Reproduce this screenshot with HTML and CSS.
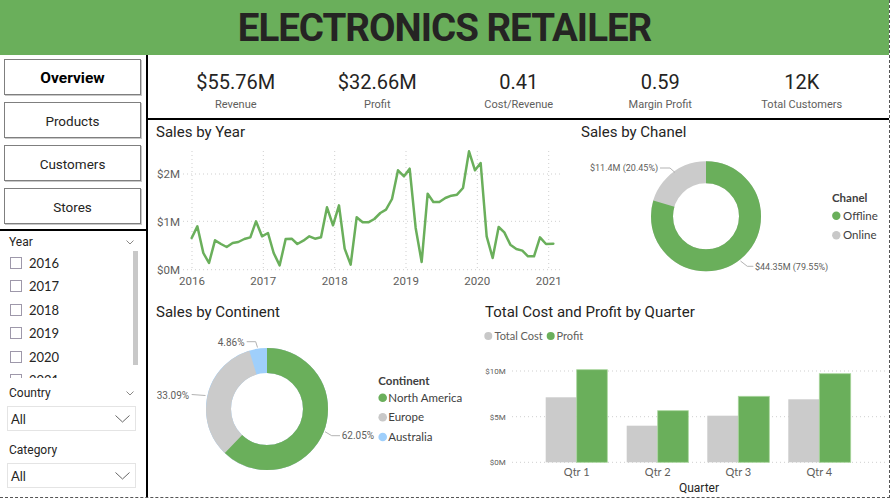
FILE: index.html
```html
<!DOCTYPE html>
<html lang="en">
<head>
<meta charset="utf-8">
<title>Electronics Retailer</title>
<link rel="stylesheet" href="styles.css">
</head>
<body>
<div class="page">
  <header class="banner"><h1>ELECTRONICS RETAILER</h1></header>
  <div class="main">
    <aside class="sidebar">
      <nav class="nav">
        <div class="nav-btn active">Overview</div>
        <div class="nav-btn">Products</div>
        <div class="nav-btn">Customers</div>
        <div class="nav-btn">Stores</div>
      </nav>
      <div class="filters">
        <div class="slicer slicer-year">
          <div class="slicer-head"><span>Year</span>
            <svg class="chev-sm" width="8" height="5" viewBox="0 0 8 5"><polyline points="0.5,0.5 4,4 7.5,0.5"/></svg>
          </div>
          <div class="year-body">
            <ul class="year-list">
              <li><span class="box"></span>2016</li>
              <li><span class="box"></span>2017</li>
              <li><span class="box"></span>2018</li>
              <li><span class="box"></span>2019</li>
              <li><span class="box"></span>2020</li>
              <li><span class="box"></span>2021</li>
            </ul>
            <div class="scrollbar"></div>
          </div>
        </div>
        <div class="slicer slicer-country">
          <div class="slicer-head"><span>Country</span>
            <svg class="chev-sm" width="8" height="5" viewBox="0 0 8 5"><polyline points="0.5,0.5 4,4 7.5,0.5"/></svg>
          </div>
          <div class="dropdown"><span>All</span>
            <svg class="chev-lg" width="15" height="8" viewBox="0 0 15 8"><polyline points="0.5,0.5 7.5,7 14.5,0.5"/></svg>
          </div>
        </div>
        <div class="slicer slicer-category">
          <div class="slicer-head"><span>Category</span></div>
          <div class="dropdown"><span>All</span>
            <svg class="chev-lg" width="15" height="8" viewBox="0 0 15 8"><polyline points="0.5,0.5 7.5,7 14.5,0.5"/></svg>
          </div>
        </div>
      </div>
    </aside>

    <section class="content">
      <div class="kpis">
        <div class="kpi"><div class="kpi-value">$55.76M</div><div class="kpi-label">Revenue</div></div>
        <div class="kpi"><div class="kpi-value">$32.66M</div><div class="kpi-label">Profit</div></div>
        <div class="kpi"><div class="kpi-value">0.41</div><div class="kpi-label">Cost/Revenue</div></div>
        <div class="kpi"><div class="kpi-value">0.59</div><div class="kpi-label">Margin Profit</div></div>
        <div class="kpi"><div class="kpi-value">12K</div><div class="kpi-label">Total Customers</div></div>
      </div>

      <div class="row row-mid">
        <div class="panel panel-year">
          <div class="panel-title">Sales by Year</div>
          <svg class="chart" width="422" height="153" viewBox="148 142 422 153">
            <g class="grid">
              <line x1="183" y1="174" x2="562" y2="174"/>
              <line x1="183" y1="221.3" x2="562" y2="221.3"/>
              <line x1="183" y1="269.7" x2="562" y2="269.7"/>
              <line x1="192" y1="151" x2="192" y2="269.7"/>
              <line x1="263.3" y1="151" x2="263.3" y2="269.7"/>
              <line x1="334.7" y1="151" x2="334.7" y2="269.7"/>
              <line x1="406" y1="151" x2="406" y2="269.7"/>
              <line x1="477.3" y1="151" x2="477.3" y2="269.7"/>
              <line x1="548.7" y1="151" x2="548.7" y2="269.7"/>
            </g>
            <g class="axis">
              <text x="157" y="178">$2M</text>
              <text x="157" y="225.5">$1M</text>
              <text x="157" y="274">$0M</text>
            </g>
            <g class="axis mid">
              <text x="192" y="284.5">2016</text>
              <text x="263.3" y="284.5">2017</text>
              <text x="334.7" y="284.5">2018</text>
              <text x="406" y="284.5">2019</text>
              <text x="477.3" y="284.5">2020</text>
              <text x="548.7" y="284.5">2021</text>
            </g>
            <polyline class="trend" transform="translate(145 118) scale(0.33333)" points="140,360 157,325 175,405 192,435 210,367 228,378 245,387 263,375 280,372 298,363 316,358 333,310 351,355 369,345 386,405 404,442 422,363 440,362 457,378 475,368 493,355 510,362 528,358 546,268 564,322 582,262 599,392 617,440 635,298 653,313 670,313 688,303 706,285 723,275 741,243 759,157 777,175 794,152 812,330 830,432 848,227 865,252 883,252 901,240 919,233 936,230 954,210 972,100 990,157 1007,135 1025,355 1043,420 1061,327 1078,343 1096,380 1114,393 1132,398 1149,415 1167,415 1185,358 1203,378 1225,377"/>
          </svg>
        </div>
        <div class="panel panel-chanel">
          <div class="panel-title">Sales by Chanel</div>
          <svg class="chart" width="319" height="153" viewBox="570 142 319 153">
            <circle class="seg gray" cx="706" cy="216.3" r="44"/>
            <circle class="seg green" cx="706" cy="216.3" r="44" stroke-dasharray="219.93 400" transform="rotate(-90 706 216.3)"/>
            <polyline class="leader" points="660,168 670,168 675,172.5"/>
            <polyline class="leader" points="740.5,261 747.3,266.3 753.3,266.3"/>
            <text class="dlabel small" x="590" y="171.3">$11.4M (20.45%)</text>
            <text class="dlabel small" x="755" y="269.5">$44.35M (79.55%)</text>
            <text class="legend-title" x="832" y="202.3">Chanel</text>
            <circle class="dot-green" cx="836.3" cy="215.7" r="4.2"/>
            <text class="legend" x="843" y="219.8">Offline</text>
            <circle class="dot-gray" cx="836.3" cy="235.3" r="4.2"/>
            <text class="legend" x="843" y="239.4">Online</text>
          </svg>
        </div>
      </div>

      <div class="row row-bot">
        <div class="panel panel-continent">
          <div class="panel-title">Sales by Continent</div>
          <svg class="chart" width="327" height="175" viewBox="148 322 327 175">
            <circle class="seg blue" cx="267" cy="409" r="48.5"/>
            <circle class="seg gray" cx="267" cy="409" r="48.5" stroke-dasharray="289.92 400" transform="rotate(-90 267 409)"/>
            <circle class="seg green" cx="267" cy="409" r="48.5" stroke-dasharray="189.08 400" transform="rotate(-90 267 409)"/>
            <polyline class="leader" points="246.7,341.7 255.7,341.7 257.5,347.5"/>
            <polyline class="leader" points="191.7,394.5 205.5,395.5"/>
            <polyline class="leader" points="325,431.7 331.7,435.7 340,435.7"/>
            <text class="dlabel" x="217.7" y="346">4.86%</text>
            <text class="dlabel" x="156.7" y="398.7">33.09%</text>
            <text class="dlabel" x="341.7" y="439.3">62.05%</text>
            <text class="legend-title" x="378.3" y="385.2">Continent</text>
            <circle class="dot-green" cx="382.7" cy="397.7" r="4.3"/>
            <text class="legend" x="388.3" y="401.8">North America</text>
            <circle class="dot-gray" cx="382.7" cy="417.3" r="4.3"/>
            <text class="legend" x="388.3" y="421.4">Europe</text>
            <circle class="dot-blue" cx="382.7" cy="437" r="4.3"/>
            <text class="legend" x="388.3" y="441.1">Australia</text>
          </svg>
        </div>
        <div class="panel panel-quarter">
          <div class="panel-title">Total Cost and Profit by Quarter</div>
          <svg class="chart" width="414" height="175" viewBox="475 322 414 175">
            <circle class="dot-gray" cx="488.3" cy="336" r="4"/>
            <text class="legend qlegend" x="494.5" y="339.8">Total Cost</text>
            <circle class="dot-green" cx="550.7" cy="336" r="4"/>
            <text class="legend qlegend" x="556.5" y="339.8">Profit</text>
            <g class="grid">
              <line x1="512" y1="371" x2="887" y2="371"/>
              <line x1="512" y1="416.7" x2="887" y2="416.7"/>
              <line x1="512" y1="462.3" x2="887" y2="462.3"/>
            </g>
            <g class="axis tiny end">
              <text x="505.7" y="373.8">$10M</text>
              <text x="505.7" y="419.5">$5M</text>
              <text x="505.7" y="465.1">$0M</text>
            </g>
            <g class="bars">
              <rect class="bar-gray" x="545.7" y="397.3" width="31" height="65"/>
              <rect class="bar-green" x="576.7" y="369.7" width="30.6" height="92.6"/>
              <rect class="bar-gray" x="626.7" y="425.7" width="31" height="36.6"/>
              <rect class="bar-green" x="657.7" y="410.7" width="30.6" height="51.6"/>
              <rect class="bar-gray" x="707.3" y="415.7" width="31" height="46.6"/>
              <rect class="bar-green" x="738.3" y="396.3" width="31" height="66"/>
              <rect class="bar-gray" x="788.3" y="399.3" width="31" height="63"/>
              <rect class="bar-green" x="819.3" y="373.7" width="31.4" height="88.6"/>
            </g>
            <g class="qlabels">
              <text x="576.7" y="476">Qtr 1</text>
              <text x="657.7" y="476">Qtr 2</text>
              <text x="738.3" y="476">Qtr 3</text>
              <text x="819.3" y="476">Qtr 4</text>
            </g>
            <text class="axis-title" x="699" y="491.8">Quarter</text>
          </svg>
        </div>
      </div>
    </section>
  </div>
</div>
</body>
</html>
```

FILE: styles.css
```css
* { box-sizing: border-box; }
body {
  margin: 0;
  background: #ffffff;
  font-family: Roboto, "DejaVu Sans", sans-serif;
  color: #252423;
}
.page {
  width: 890px;
  height: 498px;
  border-right: 1px dashed #555555;
  border-bottom: 1px dashed #555555;
  display: flex;
  flex-direction: column;
  overflow: hidden;
}
.banner {
  height: 55px;
  flex: none;
  background: #6aaf5b;
  display: flex;
  align-items: center;
  justify-content: center;
  padding-top: 2px;
}
.banner h1 {
  margin: 0;
  font-family: Roboto, sans-serif;
  font-weight: 700;
  font-size: 38.5px;
  line-height: 1;
  letter-spacing: -1px;
  color: #252423;
}
.main { display: flex; flex: 1; min-height: 0; }

/* Sidebar */
.sidebar {
  width: 148px;
  flex: none;
  border-right: 2px solid #000;
  display: flex;
  flex-direction: column;
}
.nav {
  display: flex;
  flex-direction: column;
  gap: 7px;
  padding: 4px 5px 5px 4px;
  border-bottom: 2px solid #000;
}
.nav-btn {
  height: 36px;
  border: 1px solid #7f7f7f;
  box-shadow: 1px 1px 0 #c8c8c8;
  display: flex;
  align-items: center;
  justify-content: center;
  font-size: 13.5px;
  color: #252423;
  padding-top: 1px;
}
.nav-btn.active { font-weight: 700; font-size: 15.5px; color: #000; }

.filters { display: flex; flex-direction: column; }
.slicer-head {
  display: flex;
  justify-content: space-between;
  align-items: center;
  height: 16px;
  line-height: 16px;
  padding: 0 12px 0 9px;
  font-size: 12px;
  color: #252423;
}
.chev-sm polyline { fill: none; stroke: #8a8886; stroke-width: 1; }
.chev-lg polyline { fill: none; stroke: #666; stroke-width: 1; }
.slicer-year { padding-top: 3px; }
.year-body {
  display: flex;
  height: 128px;
  padding-top: 1px;
  overflow: hidden;
}
.year-list {
  list-style: none;
  margin: 0;
  padding: 0 0 0 10px;
  flex: 1;
}
.year-list li {
  height: 23.5px;
  display: flex;
  align-items: center;
  font-family: Lato, "Noto Sans", sans-serif;
  font-size: 13px;
  color: #252423;
}
.box {
  width: 12px;
  height: 12px;
  border: 1px solid #9e98aa;
  margin-right: 7px;
  flex: none;
}
.scrollbar {
  width: 5px;
  height: 114px;
  background: #c8c8c8;
  margin-right: 8px;
  flex: none;
}
.slicer-country { margin-top: 7px; }
.slicer-category { margin-top: 11px; }
.dropdown {
  margin: 5px 0 0 7px;
  width: 129px;
  height: 25px;
  border: 1px solid #e4e4e4;
  display: flex;
  align-items: center;
  justify-content: space-between;
  padding: 0 5px 0 3px;
  font-family: Lato, "Noto Sans", sans-serif;
  font-size: 13px;
  color: #252423;
}

/* Content */
.content { flex: 1; display: flex; flex-direction: column; min-width: 0; }
.kpis {
  height: 65px;
  flex: none;
  border-bottom: 2px solid #000;
  display: grid;
  grid-template-columns: repeat(5, 141.5px);
  padding-left: 17px;
}
.kpi { text-align: center; padding-top: 15px; }
.kpi-value { font-size: 20px; line-height: 24px; color: #252423; }
.kpi-label { font-size: 11px; line-height: 14px; margin-top: 4px; color: #605e5c; }

.row { display: flex; flex: none; }
.row-mid { height: 175px; }
.row-bot { height: 202px; }
.panel { display: flex; flex-direction: column; }
.panel-year { width: 422px; }
.panel-chanel { width: 319px; }
.panel-continent { width: 327px; }
.panel-quarter { width: 414px; }
.panel-title {
  font-size: 15px;
  line-height: 19px;
  padding: 3px 0 0 8px;
  color: #252423;
  white-space: nowrap;
}
.row-bot .panel-title { padding-top: 8px; }
.panel-chanel .panel-title { padding-left: 11px; }
.panel-quarter .panel-title { padding-left: 10px; }
.chart { display: block; flex: none; overflow: visible; }

.grid line { stroke: #cfcfcf; stroke-width: 1; stroke-dasharray: 1 3; }
.axis text { font-family: Roboto, sans-serif; font-size: 11.5px; fill: #605e5c; }
.axis.mid text { text-anchor: middle; }
.axis.tiny text { font-size: 8px; }
.axis.end text { text-anchor: end; }
.trend { fill: none; stroke: #6aaf5b; stroke-width: 7.5; stroke-linejoin: round; stroke-linecap: round; }

.seg { fill: none; }
.seg.gray { stroke: #cbcbcb; stroke-width: 22; }
.seg.green { stroke: #6aaf5b; stroke-width: 22; }
.panel-continent .seg { stroke-width: 25; }
.seg.blue { stroke: #9fcffb; stroke-width: 25; }
.leader { fill: none; stroke: #b3b3b3; stroke-width: 1; }
.dlabel { font-family: Roboto, sans-serif; font-size: 10px; fill: #605e5c; }
.dlabel.small { font-size: 9px; }
.legend-title { font-family: Lato, "Noto Sans", sans-serif; font-weight: 700; font-size: 11.5px; fill: #404040; }
.legend { font-family: Lato, "Noto Sans", sans-serif; font-size: 11.5px; fill: #404040; }
.qlegend { font-size: 11px; fill: #605e5c; }
.dot-green { fill: #6aaf5b; }
.dot-gray { fill: #c8c8c8; }
.dot-blue { fill: #9fcffb; }
.bar-gray { fill: #cbcbcb; }
.bar-green { fill: #6aaf5b; stroke: #a9d69d; stroke-width: 0.8; }
.qlabels text { font-family: Lato, "Noto Sans", sans-serif; font-size: 11px; fill: #605e5c; text-anchor: middle; }
.axis-title { font-family: Roboto, sans-serif; font-size: 12px; fill: #252423; text-anchor: middle; }
```
